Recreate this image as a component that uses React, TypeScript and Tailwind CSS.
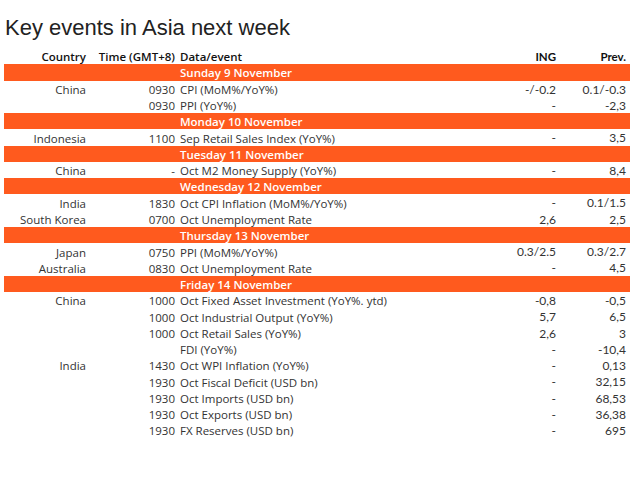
type Row =
  | { day: string }
  | { country?: string; time?: string; event: string; ing: string; prev: string };

const rows: Row[] = [
  { day: "Sunday 9 November" },
  { country: "China", time: "0930", event: "CPI (MoM%/YoY%)", ing: "-/-0.2", prev: "0.1/-0.3" },
  { time: "0930", event: "PPI (YoY%)", ing: "-", prev: "-2,3" },
  { day: "Monday 10 November" },
  { country: "Indonesia", time: "1100", event: "Sep Retail Sales Index (YoY%)", ing: "-", prev: "3,5" },
  { day: "Tuesday 11 November" },
  { country: "China", time: "-", event: "Oct M2 Money Supply (YoY%)", ing: "-", prev: "8,4" },
  { day: "Wednesday 12 November" },
  { country: "India", time: "1830", event: "Oct CPI Inflation (MoM%/YoY%)", ing: "-", prev: "0.1/1.5" },
  { country: "South Korea", time: "0700", event: "Oct Unemployment Rate", ing: "2,6", prev: "2,5" },
  { day: "Thursday 13 November" },
  { country: "Japan", time: "0750", event: "PPI (MoM%/YoY%)", ing: "0.3/2.5", prev: "0.3/2.7" },
  { country: "Australia", time: "0830", event: "Oct Unemployment Rate", ing: "-", prev: "4,5" },
  { day: "Friday 14 November" },
  { country: "China", time: "1000", event: "Oct Fixed Asset Investment (YoY%. ytd)", ing: "-0,8", prev: "-0,5" },
  { time: "1000", event: "Oct Industrial Output (YoY%)", ing: "5,7", prev: "6,5" },
  { time: "1000", event: "Oct Retail Sales (YoY%)", ing: "2,6", prev: "3" },
  { time: "", event: "FDI (YoY%)", ing: "-", prev: "-10,4" },
  { country: "India", time: "1430", event: "Oct WPI Inflation (YoY%)", ing: "-", prev: "0,13" },
  { time: "1930", event: "Oct Fiscal Deficit (USD bn)", ing: "-", prev: "32,15" },
  { time: "1930", event: "Oct Imports (USD bn)", ing: "-", prev: "68,53" },
  { time: "1930", event: "Oct Exports (USD bn)", ing: "-", prev: "36,38" },
  { time: "1930", event: "FX Reserves (USD bn)", ing: "-", prev: "695" },
];

const grid = "grid grid-cols-[82px_89px_1fr_80px_74px] items-center h-[16.27px]";

export default function App() {
  return (
    <main className="min-h-screen w-[641px] bg-white text-[#333]">
      <h1 className="pl-[5px] pt-[15px] text-[22px] leading-[25px] text-[#222] font-['Liberation_Sans',Arial,sans-serif]">
        Key events in Asia next week
      </h1>

      <section className="ml-[4px] mt-[8px] w-[626px] text-[11.5px] font-['Open_Sans',sans-serif]">
        <div className={`${grid} font-semibold text-[#111]`}>
          <span className="text-right">Country</span>
          <span className="text-right">Time (GMT+8)</span>
          <span className="pl-[5px]">Data/event</span>
          <span className="text-right font-['Lato',sans-serif] font-bold">ING</span>
          <span className="pr-[4px] text-right font-['Lato',sans-serif] font-bold">Prev.</span>
        </div>

        {rows.map((r, i) =>
          "day" in r ? (
            <div key={i} className={`${grid} bg-[#ff5a1e] font-semibold text-white`}>
              <span />
              <span />
              <span className="pl-[5px]">{r.day}</span>
            </div>
          ) : (
            <div key={i} className={grid}>
              <span className="text-right">{r.country}</span>
              <span className="text-right">{r.time}</span>
              <span className="pl-[5px] whitespace-nowrap">{r.event}</span>
              <span className="text-right font-['Lato',sans-serif] text-[12px]">{r.ing}</span>
              <span className="pr-[4px] text-right font-['Lato',sans-serif] text-[12px]">{r.prev}</span>
            </div>
          )
        )}
      </section>
    </main>
  );
}
